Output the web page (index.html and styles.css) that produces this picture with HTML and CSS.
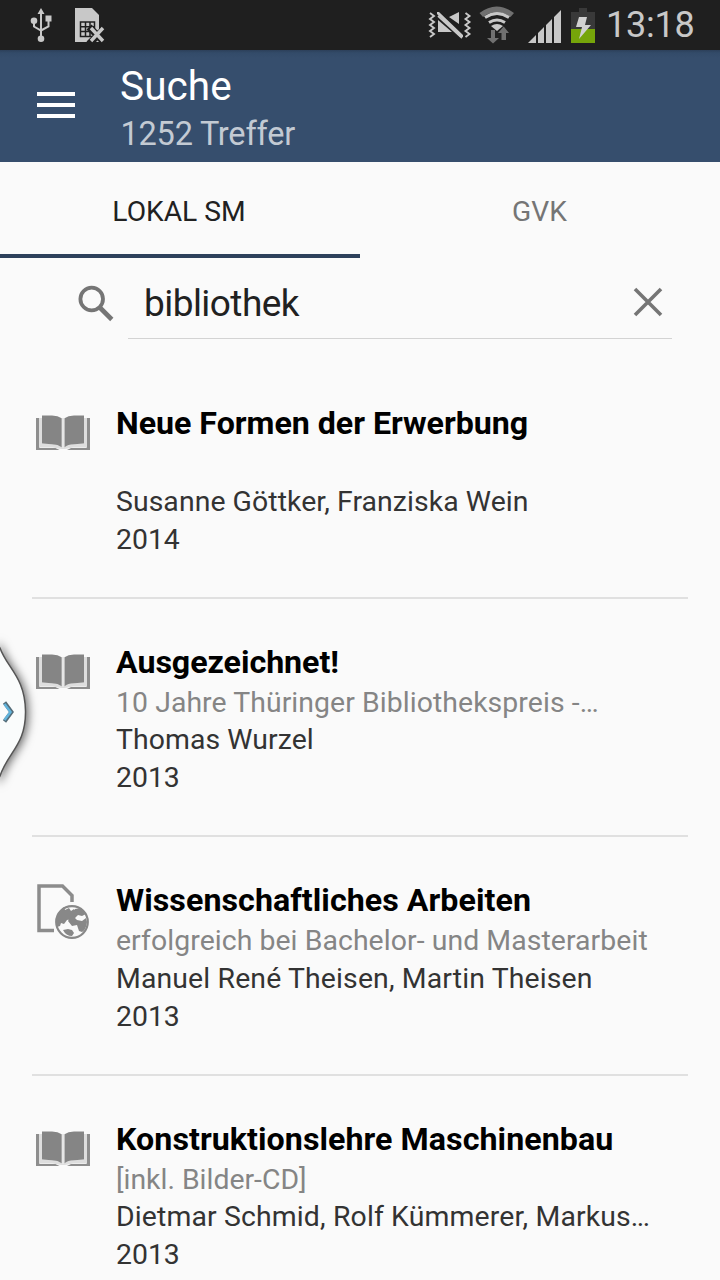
FILE: index.html
```html
<!DOCTYPE html>
<html lang="de">
<head>
<meta charset="utf-8">
<title>Suche</title>
<link rel="stylesheet" href="styles.css">
</head>
<body>
<svg class="defs" aria-hidden="true">
  <symbol id="book" viewBox="0 0 56 38">
    <path fill="#8e8e8e" d="M1 4h3.500v30h16l4 2H1zM51.500 4H55v32H32l4-2h15.500z"/>
    <path fill="#dedede" d="M4 4h3v26h11q7 1 10 4 3-3 10-4h11V4h3v29.500H38l-8 1.500h-4l-8-1.500H4z"/>
    <path fill="#858585" d="M7 1.500h10q6 .3 9.700 2.700v29Q23 30.500 17 30.300L7 29.500zM49 1.500H39q-6 .3-9.500 2.700v29q3.500-2.700 9.500-2.900l10-.8z"/>
    <path fill="#e6e6e6" d="M27 4h2v30h-2z"/>
  </symbol>
  <symbol id="webdoc" viewBox="0 0 54 58">
    <path fill="none" stroke="#8c8c8c" stroke-width="3.500" d="M18 47.500H3V3h23.500L36 12.500V19"/>
    <circle cx="36" cy="39" r="15.800" fill="#fafafa" stroke="#888" stroke-width="2.200"/>
    <path fill="#888" d="M21 34q3-7 7-10l1 3 4-2 2 3 3-2 2 3-4 3-1 4-4 1-3 4-3-1-1 3-3 1zM39 26l6-1 5 6-4 2-4-1-3 3 2 2 5 1 4-3 1 4q-1 8-5 10l-3-1-2-6-5 1-4-5 3-5 3-3zM27 47l5-1 4 1 2 3-2 3q-6 0-9-6z"/>
  </symbol>
</svg>
<main class="screen">
  <div class="status">
    <svg class="status-icons-left" viewBox="0 0 120 50">
      <g fill="none" stroke="#c8c8c8" stroke-width="2"><path d="M41 12v26M34 21v5.500l7 4 7.500-4V20"/></g>
      <g fill="#c8c8c8"><path d="m41 8 3.500 6h-7zM45.500 15.500h6v6h-6z"/><circle cx="34" cy="20.700" r="3.300"/><circle cx="41" cy="38.700" r="3.300"/>
      <path d="M75 8h17l7 7v27H75z"/></g>
      <path fill="none" stroke="#1f1f1f" stroke-width="1.500" d="M80.500 22h14v14.500h-14zM85.500 22v14.500M90 22v14.500M80.500 26.700h14M80.500 31.500h14"/>
      <path stroke="#1f1f1f" stroke-width="7" d="m89 27 17 17m0-17L89 44"/>
      <path stroke="#c8c8c8" stroke-width="3.400" d="m91 28 12 13m0-13L91 41"/>
    </svg>
    <svg class="status-icons-right" viewBox="420 0 180 50">
      <path fill="none" stroke="#c8c8c8" stroke-width="1.900" d="m430 13 4 3-4 3 4 3-4 3 4 3-4 3 4 3-4 3M465.500 13l4 3-4 3 4 3-4 3 4 3-4 3 4 3-4 3"/>
      <path fill="#c8c8c8" d="M438 20v12h14zM449 17l10-5v12zM437 12h2l24 23v2h-3L437 14z"/>
      <path fill="none" stroke="#c8c8c8" stroke-width="1.700" d="m438 16 24 22"/>
      <path fill="#707070" d="M479.500 13q17-13 34.500 0l-3.500 4q-14-10-27.500 0z"/>
      <g fill="none" stroke="#c8c8c8" stroke-width="3"><path d="M485 17.500q12-8 24 0M489 22.500q8-5 16 0"/></g>
      <path fill="#c8c8c8" d="M491 26q6-4 12 0l-6 5z"/>
      <path fill="#707070" d="M491 30h4v8h4l-6 5.500-6-5.500h4zM501.500 40h4.500v-7h3l-5.300-6.500L498 33h3.500z"/>
      <path fill="#c8c8c8" d="m528 43 8-8v8zM538 33l6-6v16h-6zM546 25l6-6v24h-6zM554 17l7-7v33h-7z"/>
      <path fill="#393939" d="M579 8h8v4h8v31h-24V12h8z"/><path fill="#76a50a" d="M571 29h24v14h-24z"/>
      <path fill="#d1d1d1" d="M579 17h8l-2 8h6l-12 14 3-12h-6z"/>
    </svg>
    <span class="clock">13:18</span>
  </div>
  <header class="toolbar">
    <div class="menu"><i></i><i></i><i></i></div>
    <div class="headings"><h1 class="heading">Suche</h1><div class="count">1252 Treffer</div></div>
  </header>
  <nav class="tabs"><div class="tab active">LOKAL SM</div><div class="tab">GVK</div></nav>
  <div class="search">
    <svg class="lens" viewBox="0 0 38 38"><circle cx="14.700" cy="15" r="11.300" fill="none" stroke="#757575" stroke-width="3.800"/><path d="m22.800 23.500 12 12" stroke="#757575" stroke-width="4.600"/></svg>
    <div class="field"><span class="query">bibliothek</span><svg class="clear" viewBox="0 0 30 30"><path d="m2 2 26 26M28 2 2 28" stroke="#757575" stroke-width="3.600"/></svg></div>
  </div>
  <section class="results">
    <article class="item"><svg class="book"><use href="#book"/></svg><div class="info"><h2 class="title">Neue Formen der Erwerbung</h2><p class="sub"></p><p class="line snug">Susanne Göttker, Franziska Wein</p><p class="line">2014</p></div></article>
    <article class="item"><svg class="book"><use href="#book"/></svg><div class="info"><h2 class="title narrow">Ausgezeichnet!</h2><p class="sub snug">10 Jahre Thüringer Bibliothekspreis -<span class="dots">...</span></p><p class="line snug">Thomas Wurzel</p><p class="line">2013</p></div></article>
    <article class="item"><svg class="webdoc"><use href="#webdoc"/></svg><div class="info"><h2 class="title wide">Wissenschaftliches Arbeiten</h2><p class="sub snug">erfolgreich bei Bachelor- und Masterarbeit</p><p class="line wide">Manuel René Theisen, Martin Theisen</p><p class="line">2013</p></div></article>
    <article class="item"><svg class="book"><use href="#book"/></svg><div class="info"><h2 class="title wide">Konstruktionslehre Maschinenbau</h2><p class="sub">[inkl. Bilder-CD]</p><p class="line wide">Dietmar Schmid, Rolf Kümmerer, Markus<span class="dots">...</span></p><p class="line">2013</p></div></article>
  </section>
  <svg class="handle" viewBox="0 0 50 170">
    <path class="handle-body" d="M-3 13 0 18C7 38 25 47 25.500 81 26 115 8 122 0 146l-3 5z"/>
    <path d="m4.500 72.500 7 9.500-7 9.500" fill="none" stroke="#546c78" stroke-width="4"/>
    <path d="m4.500 74 6 8-6 8" fill="none" stroke="#62b4dc" stroke-width="2.500"/>
  </svg>
</main>
</body>
</html>
```
FILE: styles.css
```css
* { box-sizing: border-box; margin: 0; padding: 0; }
body { font-family: Roboto, sans-serif; background: #fafafa; }
.defs { position: absolute; width: 0; height: 0; }
.screen { position: relative; width: 720px; height: 1280px; overflow: hidden; display: flex; flex-direction: column; }
.status { height: 50px; flex: none; background: #1f1f1f; display: flex; align-items: center; }
.status-icons-left { width: 120px; height: 50px; }
.status-icons-right { width: 180px; height: 50px; margin-left: 300px; }
.clock { margin-left: 6px; font-size: 36px; line-height: 50px; letter-spacing: -.2px; color: #c8c8c8; white-space: nowrap; }
.toolbar { height: 112px; flex: none; background: linear-gradient(#2c405a, #334b69 3px, #364e6d 8px); display: flex; padding-left: 37px; }
.menu { width: 38px; height: 26px; margin-top: 42px; display: flex; flex-direction: column; justify-content: space-between; }
.menu i { height: 4px; background: #fff; }
.headings { margin-left: 45px; padding-top: 12px; white-space: nowrap; }
.heading { font-size: 40.500px; line-height: 48px; font-weight: 400; letter-spacing: .1px; color: #fff; }
.count { font-size: 32.500px; line-height: 48px; letter-spacing: -.22px; padding-left: .5px; color: #c3cad3; }
.tabs { height: 96px; flex: none; display: flex; }
.tab { width: 360px; text-align: center; font-size: 28.200px; line-height: 100px; color: #757575; padding-right: 1px; }
.tab.active { color: #212121; height: 96px; border-bottom: 4px solid #2d415b; padding-right: 2px; }
.search { height: 81px; flex: none; display: flex; padding-left: 77px; }
.lens { width: 38px; height: 38px; margin-top: 26px; }
.field { width: 544px; margin-left: 13px; display: flex; align-items: center; justify-content: space-between; padding: 8px 9px 0 16px; border-bottom: 1px solid #d3d3d3; }
.query { font-size: 37px; line-height: 44px; letter-spacing: -.55px; padding-top: 4px; color: #212121; white-space: nowrap; }
.clear { width: 30px; height: 30px; }
.results { padding: 21px 32px 0; }
.item { height: 238.500px; display: flex; padding-top: 43px; border-bottom: 2px solid #e0e0e0; }
.book { flex: none; width: 56px; height: 38px; margin: 11px 0 0 3px; }
.webdoc { flex: none; width: 54px; height: 58px; margin: 3px 1.500px 0 3.500px; }
.info { margin-left: 25px; white-space: nowrap; }
.title { font-size: 32.200px; line-height: 40px; margin-bottom: 2.200px; font-weight: 700; letter-spacing: -.03px; color: #000; }
.sub, .line { font-size: 28.400px; line-height: 38px; height: 38px; }
.sub { color: #858585; height: 37.500px; letter-spacing: 0; }
.line { color: #333; }
.title.narrow { letter-spacing: -.05px; }
.title.wide { letter-spacing: .05px; }
.sub.snug, .line.snug { letter-spacing: .07px; }
.line.wide { letter-spacing: .14px; }
.line .dots, .sub .dots { letter-spacing: -1.500px; }
.handle { position: absolute; left: 0; top: 630px; width: 50px; height: 170px; }
.handle-body { fill: #fafcfc; stroke: #555; stroke-width: 1.500px; filter: drop-shadow(2px 1px 5px rgba(0, 0, 0, .6)); }
```
